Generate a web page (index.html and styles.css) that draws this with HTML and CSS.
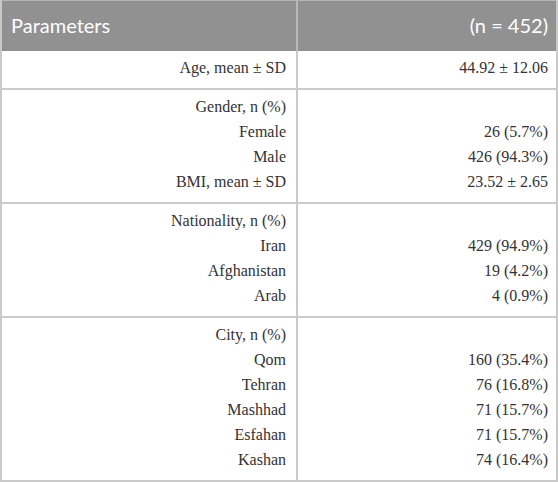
FILE: index.html
```html
<!DOCTYPE html>
<html lang="en">
<head>
<meta charset="utf-8">
<title>Parameters</title>
<link rel="stylesheet" href="styles.css">
</head>
<body>
<table class="tbl">
  <thead>
    <tr class="head">
      <th class="c1">Parameters</th>
      <th class="c2">(n = 452)</th>
    </tr>
  </thead>
  <tbody class="grp">
    <tr><td class="c1">Age, mean ± SD</td><td class="c2">44.92 ± 12.06</td></tr>
  </tbody>
  <tbody class="grp">
    <tr><td class="c1">Gender, n (%)</td><td class="c2"></td></tr>
    <tr><td class="c1">Female</td><td class="c2">26 (5.7%)</td></tr>
    <tr><td class="c1">Male</td><td class="c2">426 (94.3%)</td></tr>
    <tr><td class="c1">BMI, mean ± SD</td><td class="c2">23.52 ± 2.65</td></tr>
  </tbody>
  <tbody class="grp">
    <tr><td class="c1">Nationality, n (%)</td><td class="c2"></td></tr>
    <tr><td class="c1">Iran</td><td class="c2">429 (94.9%)</td></tr>
    <tr><td class="c1">Afghanistan</td><td class="c2">19 (4.2%)</td></tr>
    <tr><td class="c1">Arab</td><td class="c2">4 (0.9%)</td></tr>
  </tbody>
  <tbody class="grp">
    <tr><td class="c1">City, n (%)</td><td class="c2"></td></tr>
    <tr><td class="c1">Qom</td><td class="c2">160 (35.4%)</td></tr>
    <tr><td class="c1">Tehran</td><td class="c2">76 (16.8%)</td></tr>
    <tr><td class="c1">Mashhad</td><td class="c2">71 (15.7%)</td></tr>
    <tr><td class="c1">Esfahan</td><td class="c2">71 (15.7%)</td></tr>
    <tr><td class="c1">Kashan</td><td class="c2">74 (16.4%)</td></tr>
  </tbody>
</table>
</body>
</html>
```

FILE: styles.css
```css
html, body {
  margin: 0;
  padding: 0;
  background: #ffffff;
}

.tbl {
  width: 558px;
  border-collapse: collapse;
  table-layout: fixed;
  font-family: "Liberation Serif", "Times New Roman", serif;
  font-size: 16px;
  color: #333333;
}

.tbl .c1 {
  width: 296px;
  box-sizing: border-box;
}

.head th {
  height: 48px;
  padding: 0 8px 2px 9px;
  background: #919191;
  color: #ffffff;
  font-family: Lato, "Open Sans", sans-serif;
  font-weight: 400;
  font-size: 20px;
  border-left: 2px solid #c8c8c8;
  border-right: 2px solid #c8c8c8;
  border-top: 1px solid #b4b4b4;
}

.head th.c1 {
  text-align: left;
  border-right: 2px solid #b9b9b9;
}

.head th.c2 {
  text-align: right;
  border-left: 2px solid #b9b9b9;
}

.grp {
  border-bottom: 2px solid #cacaca;
}

.grp td {
  padding: 0 8px 0 9px;
  line-height: 25px;
  text-align: right;
  border-left: 2px solid #cacaca;
  border-right: 2px solid #cacaca;
}

.grp td.c1 {
  padding-right: 10px;
}

.grp tr:first-child td {
  padding-top: 4px;
}

.grp tr:last-child td {
  padding-bottom: 8px;
}
```
